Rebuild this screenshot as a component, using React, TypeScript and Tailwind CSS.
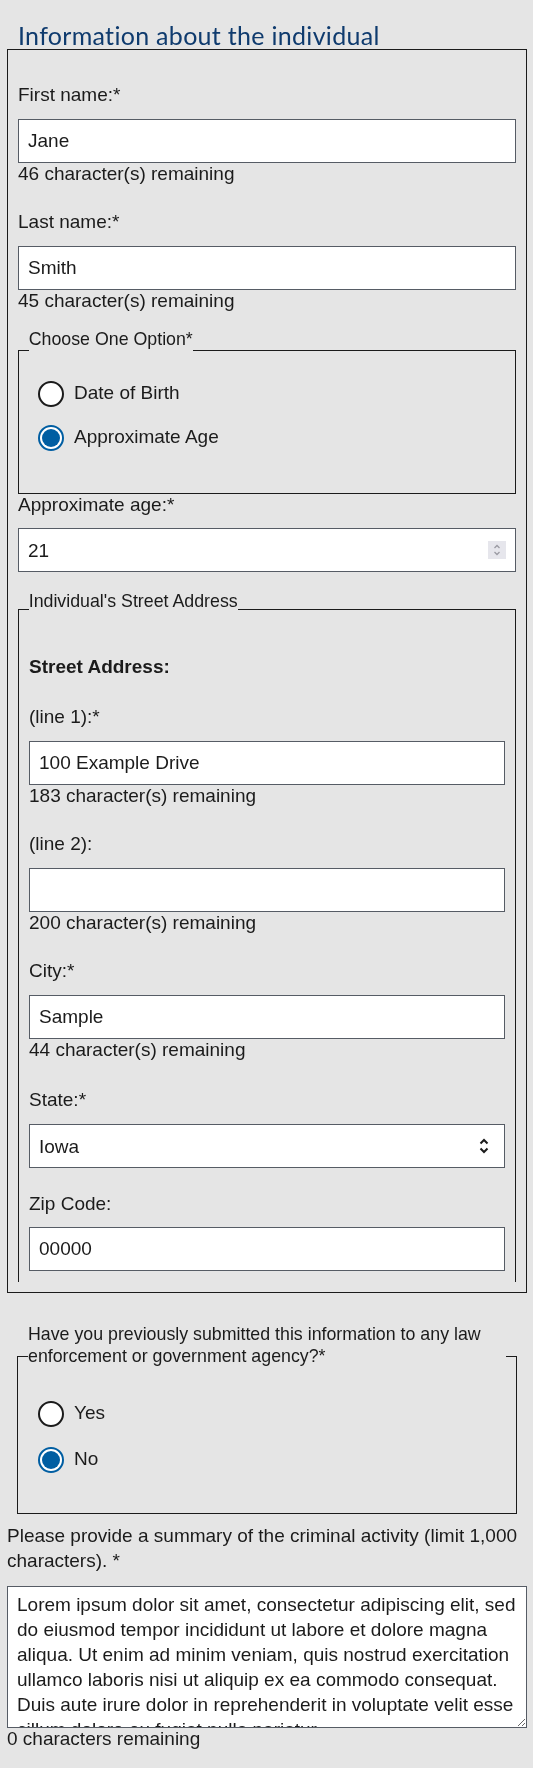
import React from "react";

function TextField({
  label,
  value,
  helper,
  className = "",
}: {
  label: string;
  value: string;
  helper: string;
  className?: string;
}) {
  return (
    <div className={className}>
      <label className="block leading-[25px]">{label}</label>
      <input
        readOnly
        value={value}
        className="mt-[12px] block h-[44px] w-full border border-[#565c65] bg-white px-[9px] leading-[25px] text-[#1b1b1b] outline-none"
      />
      <div className="leading-[22px]">{helper}</div>
    </div>
  );
}

function Radio({ checked, label, h }: { checked: boolean; label: string; h: "44" | "46" }) {
  return (
    <div className={h === "44" ? "flex h-[44px] items-center" : "flex h-[46px] items-center"}>
      {checked ? (
        <div className="h-[26px] w-[26px] shrink-0 rounded-full border-2 border-[#005ea2] bg-white p-[2px]">
          <div className="h-full w-full rounded-full bg-[#005ea2]" />
        </div>
      ) : (
        <div className="h-[26px] w-[26px] shrink-0 rounded-full border-2 border-[#1b1b1b] bg-white" />
      )}
      <span className="ml-[10px] pb-[3px] leading-[25px]">{label}</span>
    </div>
  );
}

export default function App() {
  return (
    <div className="min-h-[1768px] bg-[#e5e5e5] pl-[7px] pr-[6px] pt-[20px] font-['Liberation_Sans',Arial,sans-serif] text-[19px] text-[#1b1b1b]">
      <h2 className="ml-[11px] h-[29px] font-['Lato',sans-serif] text-[25px] font-normal leading-[30px] tracking-[0.3px] text-[#0f3b6e]">
        Information about the individual
      </h2>

      <fieldset className="border border-[#1b1b1b] px-[10px] pb-[10px] pt-[32px]">
        <TextField label="First name:*" value="Jane" helper="46 character(s) remaining" />
        <TextField
          className="mt-[24px]"
          label="Last name:*"
          value="Smith"
          helper="45 character(s) remaining"
        />

        <fieldset className="mt-[17px] border border-[#1b1b1b]">
          <legend className="ml-[9.7px] pb-[22px] text-[17.8px] leading-[21px]">
            Choose One Option*
          </legend>
          <div className="pb-[33px] pl-[19px]">
            <Radio h="44" checked={false} label="Date of Birth" />
            <Radio h="44" checked={true} label="Approximate Age" />
          </div>
        </fieldset>

        <label className="-mt-[2px] block leading-[25px]">Approximate age:*</label>
        <div className="mt-[11px] flex h-[44px] w-full items-center border border-[#565c65] bg-white pl-[9px] pr-[9px]">
          <input readOnly value="21" className="min-w-0 flex-1 leading-[25px] outline-none" />
          <div className="flex h-[18px] w-[18px] items-center justify-center bg-[#e6e6ec]">
            <svg width="10" height="14" viewBox="0 0 10 14" fill="none">
              <path d="M2.5 5 L5 2.5 L7.5 5" stroke="#9a9aa2" strokeWidth="1.3" />
              <path d="M2.5 9 L5 11.5 L7.5 9" stroke="#9a9aa2" strokeWidth="1.3" />
            </svg>
          </div>
        </div>

        <fieldset className="mt-[19px] border border-b-0 border-[#1b1b1b]">
          <legend className="ml-[9.7px] pb-[15px] text-[17.8px] leading-[21px]">
            Individual&apos;s Street Address
          </legend>
          <div className="px-[10px] pb-[11px]">
            <div className="mt-[27px] font-bold leading-[25px]">Street Address:</div>
            <TextField
              className="mt-[25px]"
              label="(line 1):*"
              value="100 Example Drive"
              helper="183 character(s) remaining"
            />
            <TextField
              className="mt-[24px]"
              label="(line 2):"
              value=""
              helper="200 character(s) remaining"
            />
            <TextField
              className="mt-[24px]"
              label="City:*"
              value="Sample"
              helper="44 character(s) remaining"
            />
            <label className="mt-[26px] block leading-[25px]">State:*</label>
            <div className="mt-[12px] flex h-[44px] w-full items-center justify-between border border-[#565c65] bg-white pl-[9px] pr-[15px]">
              <span className="leading-[25px]">Iowa</span>
              <svg width="10" height="16" viewBox="0 0 10 16" fill="none">
                <path d="M1.5 5.5 L5 2 L8.5 5.5" stroke="#1b1b1b" strokeWidth="2" />
                <path d="M1.5 10.5 L5 14 L8.5 10.5" stroke="#1b1b1b" strokeWidth="2" />
              </svg>
            </div>
            <label className="mt-[23px] block leading-[25px]">Zip Code:</label>
            <input
              readOnly
              value="00000"
              className="mt-[11px] block h-[44px] w-full border border-[#565c65] bg-white px-[9px] leading-[25px] outline-none"
            />
          </div>
        </fieldset>
      </fieldset>

      <fieldset className="mx-[10px] mt-[30px] border border-[#1b1b1b]">
        <legend className="ml-[10px] w-[478px] pb-[23px] text-[17.8px] leading-[22.4px]">
          Have you previously submitted this information to any law enforcement or government
          agency?*
        </legend>
        <div className="pb-[30px] pl-[20px]">
          <Radio h="46" checked={false} label="Yes" />
          <Radio h="46" checked={true} label="No" />
        </div>
      </fieldset>

      <p className="mt-[9px] leading-[25px]">
        Please provide a summary of the criminal activity (limit 1,000 characters). *
      </p>
      <textarea
        readOnly
        spellCheck={false}
        value="Lorem ipsum dolor sit amet, consectetur adipiscing elit, sed do eiusmod tempor incididunt ut labore et dolore magna aliqua. Ut enim ad minim veniam, quis nostrud exercitation ullamco laboris nisi ut aliquip ex ea commodo consequat. Duis aute irure dolor in reprehenderit in voluptate velit esse cillum dolore eu fugiat nulla pariatur."
        className="mt-[13px] block h-[142px] w-full border border-[#565c65] bg-white px-[9px] pt-[5px] leading-[25px] outline-none"
      />
      <div className="leading-[22px]">0 characters remaining</div>
    </div>
  );
}
